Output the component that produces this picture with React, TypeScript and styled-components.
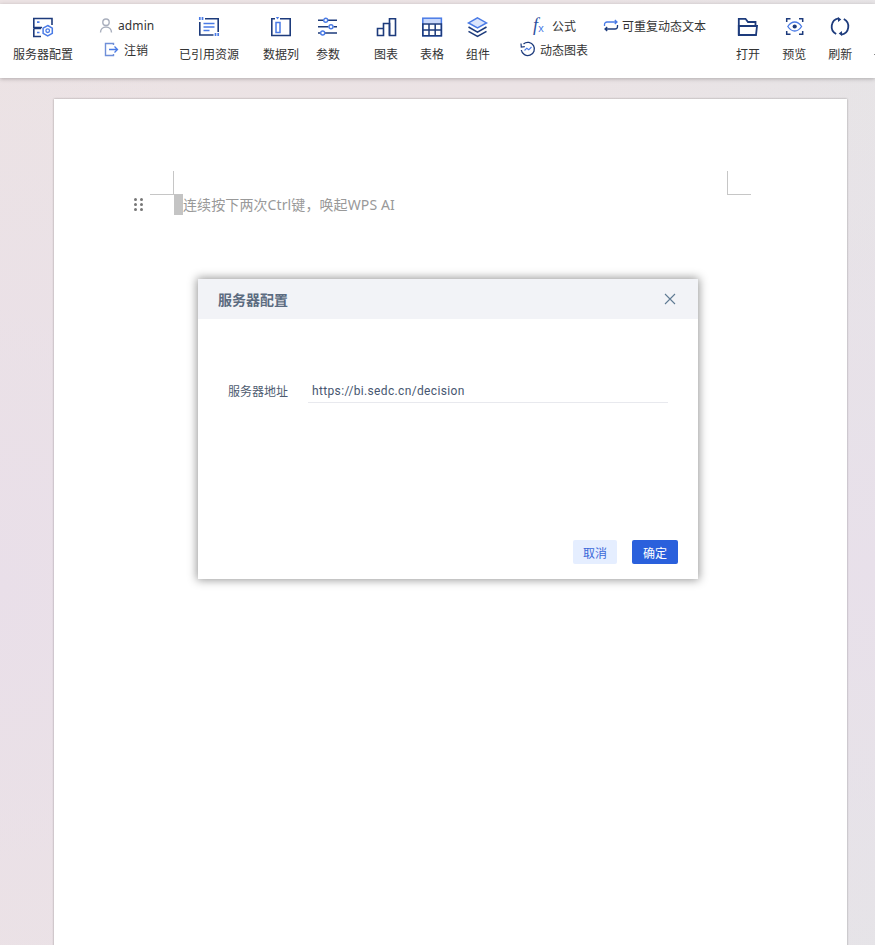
import React from "react";
import styled, { createGlobalStyle } from "styled-components";

const NAVY = "#1d3b7c";
const BLUE = "#4a7be6";
const CJK = `"Noto Sans CJK SC", "Noto Sans", sans-serif`;

const Global = createGlobalStyle`
  html, body { margin: 0; padding: 0; height: 945px; overflow: hidden; }
  body { font-family: ${CJK}; }
`;

const Screen = styled.div`
  width: 875px;
  height: 945px;
  position: relative;
  overflow: hidden;
  display: flex;
  flex-direction: column;
  background:
    radial-gradient(420px 560px at 0% 62%, #e9dfe9 0%, rgba(233, 223, 233, 0) 100%),
    radial-gradient(500px 500px at 100% 60%, #e8e0ea 0%, rgba(232, 224, 234, 0) 100%),
    linear-gradient(100deg, #ece3e4 0%, #ebe3e5 55%, #e5e5e7 100%);
  padding-top: 4px;
  box-sizing: border-box;
`;

const Toolbar = styled.header`
  height: 74px;
  flex: none;
  background: #fff;
  box-shadow: 0 1px 4px rgba(0, 0, 0, 0.25);
  display: flex;
  align-items: flex-start;
  padding-left: 13px;
  overflow: hidden;
  position: relative;
  z-index: 1;
`;

const Tool = styled.div<{ $ml?: number }>`
  flex: none;
  margin-left: ${(p) => p.$ml ?? 0}px;
  display: flex;
  flex-direction: column;
  align-items: center;
  padding-top: 13px;
  color: #333;
`;

const ToolIcon = styled.svg`
  width: 24px;
  height: 24px;
  display: block;
  fill: none;
`;

const ToolLabel = styled.span`
  font-size: 12px;
  line-height: 18px;
  margin-top: 4px;
  white-space: nowrap;
  color: #333;
`;

const ClippedEdge = styled.span`
  flex: none;
  width: 1px;
  height: 1px;
  margin: 50px 0 0 22px;
  background: #888;
`;

const StackColumn = styled.div<{ $ml: number; $w: number }>`
  flex: none;
  width: ${(p) => p.$w}px;
  margin-left: ${(p) => p.$ml}px;
  padding-top: 12px;
  display: flex;
  flex-direction: column;
  gap: 6px;
`;

const MiniRow = styled.div<{ $pl?: number }>`
  display: flex;
  align-items: center;
  height: 18px;
  padding-left: ${(p) => p.$pl ?? 0}px;
  font-size: 12px;
  color: #333;
  white-space: nowrap;
`;

const MiniIcon = styled.svg<{ $mr: number }>`
  width: 16px;
  height: 16px;
  flex: none;
  margin-right: ${(p) => p.$mr}px;
  fill: none;
`;

const AdminName = styled.span`
  font-family: "Noto Sans", sans-serif;
  font-size: 12px;
  letter-spacing: 0.1px;
  color: #333;
`;

const Fx = styled.span`
  width: 14px;
  flex: none;
  margin-right: 5px;
  font-family: "Liberation Serif", serif;
  font-style: italic;
  font-size: 18px;
  line-height: 16px;
  color: #2b4f9e;
  display: flex;
  align-items: center;
`;

const FxSub = styled.span`
  font-family: "Liberation Sans", sans-serif;
  font-style: normal;
  font-size: 11px;
  color: ${BLUE};
  margin: 6px 0 0 0;
`;

const DynGroup = styled.div`
  flex: none;
  margin-left: 30px;
  width: 186px;
  display: grid;
  grid-template-columns: 83px 103px;
  grid-template-rows: 18px 18px;
  row-gap: 6px;
  padding-top: 12px;
`;

const Workspace = styled.main`
  flex: 1;
  min-height: 0;
  padding: 21px 28px 0 54px;
  display: flex;
  position: relative;
`;

const Page = styled.section`
  flex: 1;
  height: 900px;
  background: #fff;
  box-shadow: 0 0 2px rgba(0, 0, 0, 0.35);
  padding-top: 72px;
  box-sizing: border-box;
`;

const CornerRow = styled.div`
  display: flex;
  justify-content: space-between;
  padding: 0 96px;
`;

const Corner = styled.span<{ $side: "left" | "right" }>`
  width: 23px;
  height: 23px;
  border-bottom: 1px solid #c6c6c6;
  ${(p) => (p.$side === "left" ? "border-right" : "border-left")}: 1px solid #c6c6c6;
`;

const EditorLine = styled.div`
  display: flex;
  align-items: center;
  height: 21px;
  margin-top: -1px;
  padding-left: 80px;
`;

const DragHandle = styled.div`
  width: 9px;
  display: grid;
  grid-template-columns: 3px 3px;
  gap: 2px 3px;
  margin-right: 31px;
`;

const Dot = styled.i`
  width: 3px;
  height: 3px;
  border-radius: 50%;
  background: #777;
`;

const Caret = styled.span`
  width: 9px;
  height: 21px;
  background: #c4c4c4;
`;

const Placeholder = styled.span`
  font-family: "Noto Sans", "Noto Sans CJK SC", sans-serif;
  font-size: 14px;
  line-height: 19px;
  letter-spacing: 0.1px;
  color: #999;
  white-space: nowrap;
`;

const Dialog = styled.div`
  position: absolute;
  left: 198px;
  top: 279px;
  width: 500px;
  height: 300px;
  background: #fff;
  box-shadow: 0 0 9px 1px rgba(0, 0, 0, 0.42);
  display: flex;
  flex-direction: column;
  z-index: 2;
`;

const DialogHeader = styled.div`
  height: 40px;
  flex: none;
  background: #f2f3f7;
  display: flex;
  align-items: center;
  justify-content: space-between;
  padding: 0 22px 0 20px;
`;

const DialogTitle = styled.h2`
  margin: 0;
  font-size: 14px;
  font-weight: 700;
  color: #5c6b80;
`;

const CloseIcon = styled.svg`
  width: 12px;
  height: 12px;
  display: block;
`;

const DialogBody = styled.div`
  flex: 1;
  padding: 60px 30px 0;
`;

const FieldRow = styled.div`
  display: flex;
  align-items: stretch;
`;

const FieldLabel = styled.label`
  width: 60px;
  margin-right: 20px;
  font-size: 12px;
  line-height: 24px;
  color: #4e5b70;
  white-space: nowrap;
`;

const FieldValue = styled.div`
  flex: 1;
  height: 23px;
  padding-left: 4px;
  border-bottom: 1px solid #e8e9ee;
  font-family: Roboto, "Liberation Sans", sans-serif;
  font-size: 12px;
  line-height: 25px;
  letter-spacing: 0.35px;
  color: #475670;
`;

const DialogFooter = styled.div`
  flex: none;
  display: flex;
  justify-content: flex-end;
  gap: 15px;
  padding: 0 20px 15px;
`;

const Button = styled.button<{ $primary?: boolean }>`
  height: 24px;
  width: ${(p) => (p.$primary ? 46 : 44)}px;
  padding: 0;
  border: 0;
  border-radius: 2px;
  font-family: ${CJK};
  font-size: 12px;
  background: ${(p) => (p.$primary ? "#2a60dc" : "#e5eeff")};
  color: ${(p) => (p.$primary ? "#fff" : "#3a68d8")};
`;

const ServerIcon = () => (
  <ToolIcon viewBox="0 0 24 24">
    <path d="M11 10.500H2.800V1.500H21V8" stroke={NAVY} strokeWidth="1.600" />
    <path d="M2.800 11.500V19.500H10M2.800 11.500H10" stroke={NAVY} strokeWidth="1.600" />
    <path d="M6 5.200h2.500M6 15.500h2.500" stroke={BLUE} strokeWidth="1.700" />
    <path d="M16.700 8.500l4.600 2.600v5.300l-4.600 2.600-4.600-2.600v-5.300z" stroke={BLUE} strokeWidth="1.500" />
    <circle cx="16.700" cy="13.700" r="1.800" stroke={BLUE} strokeWidth="1.300" />
  </ToolIcon>
);

const QuoteIcon = () => (
  <ToolIcon viewBox="0 0 24 24">
    <path d="M8 1.800H21.200V15M16.500 18H2.800V5" stroke={NAVY} strokeWidth="1.600" />
    <path d="M6.500 6.500h11M6.500 10h11M6.500 13.500h6" stroke={BLUE} strokeWidth="1.400" />
    <path d="M2.800 0v3M5.500 0v3M18.500 16v3M21.200 16v3" stroke={BLUE} strokeWidth="1.700" />
  </ToolIcon>
);

const ColumnIcon = () => (
  <ToolIcon viewBox="0 0 24 24">
    <path d="M6 1.800H2.800V18.500H21.200V1.800H11" stroke={NAVY} strokeWidth="1.600" />
    <rect x="7" y="5.500" width="4" height="10" stroke={BLUE} strokeWidth="1.500" />
    <path d="M6.800 0h3.400L8.500 2.500z" fill={BLUE} />
  </ToolIcon>
);

const ParamsIcon = () => (
  <ToolIcon viewBox="0 0 24 24">
    <path d="M2 3.300h5.500M12 3.300h9M2 9.700h10.500M17.500 9.700H21M2 16h2.500M9 16h12" stroke={NAVY} strokeWidth="1.500" />
    <circle cx="9.700" cy="3.300" r="2" stroke={BLUE} strokeWidth="1.400" />
    <circle cx="15" cy="9.700" r="2" stroke={BLUE} strokeWidth="1.400" />
    <circle cx="6.700" cy="16" r="2" stroke={BLUE} strokeWidth="1.400" />
  </ToolIcon>
);

const ChartIcon = () => (
  <ToolIcon viewBox="0 0 24 24">
    <path d="M3.500 18.500V11.500H9.500V18.500zM9.500 18.500V6.500H15.500V18.500" stroke={NAVY} strokeWidth="1.600" />
    <path d="M15.500 18.500V1.800H21.500V18.500z" stroke={NAVY} strokeWidth="1.600" />
  </ToolIcon>
);

const TableIcon = () => (
  <ToolIcon viewBox="0 0 24 24">
    <rect x="3" y="1.500" width="18" height="5" fill="#c9d8fb" />
    <rect x="2.800" y="1.200" width="18.600" height="17.600" stroke={BLUE} strokeWidth="1.500" />
    <path d="M2.800 7H21.400V18.800H2.800zM2.800 12.900H21.400M9 7V18.800M15.200 7V18.800" stroke={NAVY} strokeWidth="1.500" />
  </ToolIcon>
);

const LayersIcon = () => (
  <ToolIcon viewBox="0 0 24 24">
    <path d="M11.500 0.800l9 5.100-9 5.100-9-5.100z" stroke={BLUE} strokeWidth="1.500" fill="#dbe5fc" />
    <path d="M2.500 10l9 5.100 9-5.100M2.500 14.400l9 5 9-5" stroke={NAVY} strokeWidth="1.600" />
  </ToolIcon>
);

const FolderIcon = () => (
  <ToolIcon viewBox="0 0 24 24">
    <path d="M2.800 18V1.800H9.500L12 5H19.500V9" stroke={NAVY} strokeWidth="1.800" />
    <path d="M2.800 18V9H21L20 18z" stroke={NAVY} strokeWidth="1.800" />
  </ToolIcon>
);

const PreviewIcon = () => (
  <ToolIcon viewBox="0 0 24 24">
    <path d="M4.700 5V1.700H8.500M17 1.700H20.700V5M20.700 14V17.300H17M8.500 17.300H4.700V14" stroke={NAVY} strokeWidth="1.500" />
    <path d="M5.800 9.500c2-3 4.400-4.500 6.900-4.500s4.900 1.500 6.900 4.500c-2 3-4.400 4.500-6.900 4.500s-4.900-1.500-6.900-4.500z" stroke={BLUE} strokeWidth="1.300" />
    <circle cx="12.700" cy="9.500" r="2.100" fill={NAVY} />
  </ToolIcon>
);

const RefreshIcon = () => (
  <ToolIcon viewBox="0 0 24 24">
    <path d="M10.500 1.300A8.400 8.400 0 0 0 8.200 17" stroke={NAVY} strokeWidth="1.800" />
    <path d="M13.500 17.700A8.400 8.400 0 0 0 15.800 2" stroke={NAVY} strokeWidth="1.800" />
    <path d="M10 0v5l3.300-2.500zM14 14v5l-3.300-2.500z" fill={NAVY} />
  </ToolIcon>
);

const App = () => (
  <Screen>
    <Global />
    <Toolbar>
      <Tool>
        <ServerIcon />
        <ToolLabel>服务器配置</ToolLabel>
      </Tool>
      <StackColumn $ml={25} $w={57}>
        <MiniRow>
          <MiniIcon $mr={4} viewBox="0 0 16 16">
            <circle cx="8" cy="5.200" r="3.200" stroke="#a9afbd" strokeWidth="1.400" />
            <path d="M2.500 15.500c0-3.500 2.500-5.500 5.500-5.500s5.500 2 5.500 5.500" stroke="#a9afbd" strokeWidth="1.400" />
          </MiniIcon>
          <AdminName>admin</AdminName>
        </MiniRow>
        <MiniRow $pl={5}>
          <MiniIcon $mr={5} viewBox="0 0 16 16">
            <path d="M10.500 4V2.500H2.500v12h8V13" stroke="#6f8fd8" strokeWidth="1.400" />
            <path d="M6 8.500h8.500M11.500 5.500l3 3-3 3" stroke={BLUE} strokeWidth="1.300" />
          </MiniIcon>
          注销
        </MiniRow>
      </StackColumn>
      <Tool $ml={24}>
        <QuoteIcon />
        <ToolLabel>已引用资源</ToolLabel>
      </Tool>
      <Tool $ml={24}>
        <ColumnIcon />
        <ToolLabel>数据列</ToolLabel>
      </Tool>
      <Tool $ml={17}>
        <ParamsIcon />
        <ToolLabel>参数</ToolLabel>
      </Tool>
      <Tool $ml={34}>
        <ChartIcon />
        <ToolLabel>图表</ToolLabel>
      </Tool>
      <Tool $ml={22}>
        <TableIcon />
        <ToolLabel>表格</ToolLabel>
      </Tool>
      <Tool $ml={22}>
        <LayersIcon />
        <ToolLabel>组件</ToolLabel>
      </Tool>
      <DynGroup>
        <MiniRow $pl={13}>
          <Fx>
            f<FxSub>x</FxSub>
          </Fx>
          公式
        </MiniRow>
        <MiniRow>
          <MiniIcon $mr={3} viewBox="0 0 16 16">
            <path d="M1.500 9V7.500a2.500 2.500 0 0 1 2.500-2.500h10M11.800 3l2.200 2-2.200 2" stroke={BLUE} strokeWidth="1.300" />
            <path d="M14.500 8V9.500a2.500 2.500 0 0 1-2.500 2.500H2M4.200 10L2 12l2.200 2" stroke={NAVY} strokeWidth="1.300" />
          </MiniIcon>
          可重复动态文本
        </MiniRow>
        <MiniRow>
          <MiniIcon $mr={4} viewBox="0 0 16 16">
            <path d="M3.500 3a6.600 6.600 0 1 1-2.200 6" stroke={NAVY} strokeWidth="1.300" />
            <path d="M1 2.500l.3 3.500 3.500-.4" stroke={NAVY} strokeWidth="1.200" />
            <path d="M4.500 9.500l2.300-2.300 2 1.600 2.700-2.800" stroke={BLUE} strokeWidth="1.200" />
          </MiniIcon>
          动态图表
        </MiniRow>
      </DynGroup>
      <Tool $ml={30}>
        <FolderIcon />
        <ToolLabel>打开</ToolLabel>
      </Tool>
      <Tool $ml={22}>
        <PreviewIcon />
        <ToolLabel>预览</ToolLabel>
      </Tool>
      <Tool $ml={22}>
        <RefreshIcon />
        <ToolLabel>刷新</ToolLabel>
      </Tool>
      <ClippedEdge />
    </Toolbar>
    <Workspace>
      <Page>
        <CornerRow>
          <Corner $side="left" />
          <Corner $side="right" />
        </CornerRow>
        <EditorLine>
          <DragHandle>
            <Dot /><Dot /><Dot /><Dot /><Dot /><Dot />
          </DragHandle>
          <Caret />
          <Placeholder>{"连续按下两次Ctrl键\uFF0C唤起WPS AI"}</Placeholder>
        </EditorLine>
      </Page>
    </Workspace>
    <Dialog>
      <DialogHeader>
        <DialogTitle>服务器配置</DialogTitle>
        <CloseIcon viewBox="0 0 12 12">
          <path d="M1 1l10 10M11 1L1 11" stroke="#5f7b94" strokeWidth="1.100" fill="none" />
        </CloseIcon>
      </DialogHeader>
      <DialogBody>
        <FieldRow>
          <FieldLabel>服务器地址</FieldLabel>
          <FieldValue>https://bi.sedc.cn/decision</FieldValue>
        </FieldRow>
      </DialogBody>
      <DialogFooter>
        <Button>取消</Button>
        <Button $primary>确定</Button>
      </DialogFooter>
    </Dialog>
  </Screen>
);

export default App;
